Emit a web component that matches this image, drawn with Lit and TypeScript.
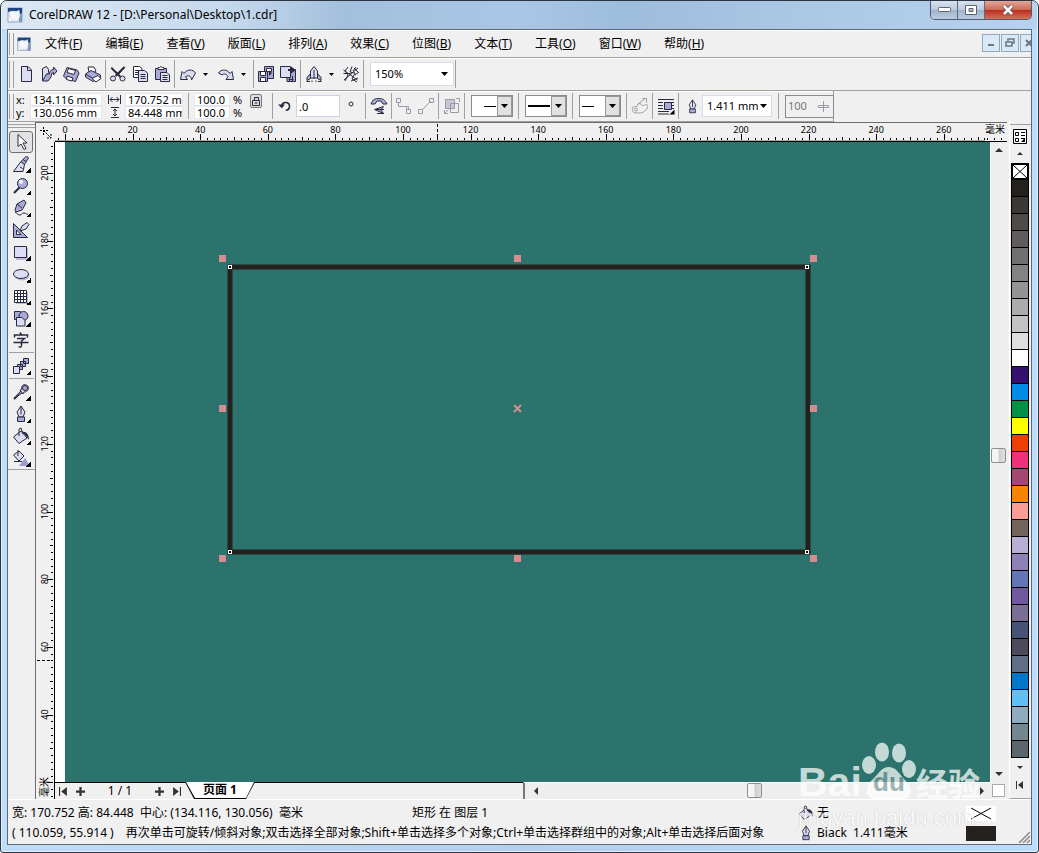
import { LitElement, html, svg, css, TemplateResult } from "lit";
import { customElement } from "lit/decorators.js";

const MENUS: [string, string][] = [
  ["文件", "F"], ["编辑", "E"], ["查看", "V"], ["版面", "L"], ["排列", "A"], ["效果", "C"],
  ["位图", "B"], ["文本", "T"], ["工具", "O"], ["窗口", "W"], ["帮助", "H"],
];

const PALETTE = [
  "#24211d", "#3a3734", "#4f4a47", "#605c5b", "#70706e", "#838382", "#949494", "#acacaa", "#c3c3c1", "#dededc",
  "#ffffff", "#35106f", "#008be6", "#009147", "#ffff00", "#ee3f00", "#f03078", "#a44872", "#f58400", "#fb9c97",
  "#71645a", "#b9afd6", "#8f80b7", "#6375b4", "#7159a0", "#7a6e95", "#465377", "#4e4a5b", "#5f6e86", "#0077c8",
  "#5fc0f5", "#8facbf", "#738790", "#5b676d",
];

const UNIT = 3.38;

// Icons are drawn on an 18 x 18 grid.
const ICONS: Record<string, TemplateResult> = {
  app: svg`<rect x="2" y="2" width="14" height="14" fill="#fff" stroke="#8aa0bd"/><path d="M2 2h14v14h-3l1-7-2-4H7L2 6z" fill="#1e447c"/><path d="M14 8l2-1v9h-3z" fill="#7f9cc4"/><path d="M3 6l4-1 3 1 3-2 1 5-1 3-1 3H6L4 12z" fill="#f4f7fb" stroke="#b5c4d6" stroke-width=".6"/>`,
  doc: svg`<path class="l" d="M3.500 1.500h6.500l3.500 3.500v11.500h-10z"/><path class="n" d="M9.500 1.500v4h4"/>`,
  open: svg`<path class="l" d="M2.500 15.500V3.500l4-2 2 3v3l-4 8z"/><path class="f" d="M2.500 16l4-7h3c0-3 2-4.500 4-4.500V2l3.500 4-3.500 4V7.500c-2 0-2 2-2.500 4.500l-3 4z"/>`,
  save: svg`<path class="f" d="M5 2.500l10 2.500 2 3-3.500 8.500-9-2.500-3-3z"/><path class="w" d="M6.500 3.500l7 2-1.500 4-7-2zM5 11l6 2-1 3-5.500-1.500z"/>`,
  print: svg`<path class="w" d="M4 2h6l2 4-4 3-3-2z"/><path class="f" d="M1.500 9L7 5.500l9.500 4.500v3L9 16.500 1.500 12z"/><path class="w" d="M8 13.500l6-3 3 3-5 3.500z"/><path class="n" d="M2 9.500l6.500 3.500"/>`,
  cut: svg`<path class="s2" d="M15.500 2L6.500 11M2.500 3l9 9"/><path class="w" d="M2 2.500l8 7M16 2l-7 8"/><ellipse class="l" cx="4" cy="13.500" rx="2.500" ry="2.500"/><ellipse class="l" cx="13.500" cy="13.500" rx="2.500" ry="2.500"/>`,
  copy: svg`<path class="w" d="M2.500 1.500h6l2.500 2v9H2.500z"/><path class="n" d="M4 5.500h5M4 7.500h3M4 9.500h3"/><path class="l" d="M7.500 5.500h6L16.500 8v8.500h-9z"/><path class="n" d="M9.500 9.500h5M9.500 11.500h5M9.500 13.500h5"/>`,
  paste: svg`<path class="f" d="M2.500 3.500h11v11h-11z"/><path class="w" d="M5 4.500V2.500h1.500l1.500-1 1.500 1H11v2z"/><path class="l" d="M7.500 7.500h6.500L16.500 10v6.500h-9z"/><path class="n" d="M9.500 10.500h5M9.500 12.500h5M9.500 14.500h5"/>`,
  undo: svg`<path class="l" d="M1.500 14.500L3 6.500l2 2C8 4 14 4 16.500 8l-4 7c0-4-3-5-6-3.500l2 3z"/>`,
  redo: svg`<path class="l" d="M16.500 14.500L15 6.500l-2 2C10 4 4 4 1.500 8l4 2c1-2 4-1 5.500 1.500l-2 3z"/>`,
  import: svg`<path class="f" d="M7.500 1.500h9v12h-9z"/><path class="w" d="M9.500 3.500h5v3h-5z"/><path class="f" d="M1.500 6.500h9v10h-9z"/><path class="w" d="M3.500 6.500h5v4h-5zM3.500 12.500h5v4h-5z"/><path class="k" d="M12 9V5.500L15 8l-3 3z"/>`,
  export: svg`<path class="f" d="M8 4.500h8.500v12H8z"/><path class="l" d="M1.500 1.500h10v11h-10z"/><path class="k" d="M12 4V1.500L17 5l-5 3.500V6H9V4z"/><path class="n" d="M9.500 14.500h5M10.500 16v-3M13.500 16v-5"/>`,
  launch: svg`<path class="l" d="M5.500 13V6L9 1.500 12.500 6v7z"/><path class="f" d="M5.500 8.500L2 12.500v3l3.500-2zM12.500 8.500l3.500 4v3l-3.500-2z"/><path class="n" d="M9 5v9M7 15.500v1.500M11 15.500v1.500M1.500 16.500H5M13 16.500h3.500"/>`,
  web: svg`<path class="n" d="M1.500 5l14 10M2 15L16 3M6 2l-3 4 3 4-3 6M10 1.500L8 7l5 1-3 6 5 3M1.500 8.500h7M12 3l4 4M14 2l-3 4M9 16l7-3M13 10l4-3"/>`,
  pick: svg`<path class="w" d="M6 1.500v12l3-2.500 3 5.500 2-1-3-5.500h4z"/>`,
  shape: svg`<path class="l" d="M1.500 16.500L9 6.500l3.500 3-1.500 7z"/><path class="f" d="M9 6.500L14.500 1l2 2-4 6.500z"/><path class="n" d="M11 4.500l3 2M8 12l2.500 1.500"/>`,
  zoom: svg`<path class="s2" d="M2 16l6-6"/><circle class="f" cx="10.500" cy="6.500" r="5"/><circle cx="9" cy="5" r="2" fill="#fff"/>`,
  free: svg`<path class="f" d="M3 11L5 5l7-4 2 3-4 7-6 2z"/><path class="n" d="M5 5l5 4M3 13c3 2 3 3 5 3s1-2 4-2 2 2 4 1"/>`,
  smart: svg`<path fill-rule="evenodd" class="f" d="M1.500 2.500v14h14zM4.500 9v4.500H9z"/><path class="l" d="M8 10l2-5 5-3.500 2 2-3 4.500z"/>`,
  rect: svg`<path class="sh" d="M4 5h12v12H4z"/><path class="l" d="M2.500 3.500h12v11h-12z"/>`,
  ellipse: svg`<ellipse class="sh" cx="10" cy="10.500" rx="7.500" ry="5"/><ellipse class="l" cx="9" cy="9" rx="7.500" ry="4.500"/>`,
  grid: svg`<path class="sh" d="M4 5h12v12H4z"/><path class="w" d="M2.500 3.500h12v12h-12z"/><path class="n" d="M2.500 6.500h12M2.500 9.500h12M2.500 12.500h12M5.500 3.500v12M8.500 3.500v12M11.500 3.500v12"/>`,
  shapes: svg`<path class="f" d="M2.500 2.500h6v8h-6z"/><circle class="f" cx="11.500" cy="7" r="4.500"/><path class="l" d="M4.500 8.500H10l3 3v5.500H4.500z"/>`,
  text: svg`<path class="n" stroke-width="1.500" d="M2.500 6.500V4h13v2.500M8 1.500l1.500 2.500M5 7.500h7.500l-3 2.500v4.500c0 2-1.500 2-3 1M1.500 11.500h15"/>`,
  blend: svg`<path class="f" d="M11.500 1.500h5v5h-5zM8.500 4.500h5v5h-5zM5.500 7.500h5v5h-5z"/><path class="l" d="M1.500 9.500h6v7h-6z"/>`,
  eyedrop: svg`<path class="s2" d="M2 16l8-8"/><path class="f" d="M2 16l7-8 1.500 1.500z"/><path class="l" d="M8 7l3 4 1-2c5 0 6-6 2-7-3-1-5 1-4 4z"/><circle class="f" cx="13" cy="5" r="2.500"/>`,
  pen: svg`<path class="l" d="M7 12L5 7l4-6 4 6-2 5z"/><path class="n" d="M9 1.500v8"/><path class="f" d="M5.500 12h7v4.500h-7z"/>`,
  bucket: svg`<path class="l" d="M1.500 10L9 4l6 7-8 5.500z"/><path class="n" d="M7 9V2l2-1 2 6"/><path class="k" d="M10 5c4-1 7 2 7 8l-3-4z"/>`,
  ifill: svg`<path d="M7 17L13 9l5 8z" fill="#9a9acb"/><path class="l" d="M1.500 6L7 2l5 5-5 5z"/><path class="n" d="M6 7V1M2 12.500h8"/>`,
  rotate: svg`<path class="s2" d="M5 8a5 5 0 1 1 5 6.500"/><path class="k" d="M0 7h9l-4 5z"/>`,
  mirror: svg`<path class="f" d="M1 7c2-5 4-5.500 8-5.500S15 3 17 7h-4L11 4H7L5 7z"/><path class="f" d="M13.500 9.500l-9 3 9 4-2.500-3.500z"/><path class="n" d="M6 12.500h8M7 16.500h7"/>`,
  conn1: svg`<path class="g" d="M3.500 5.500v4h8v3M1.500 1.500h4v4h-4zM11.500 12.500h4v4h-4zM13.500 12v-2.500h-3"/>`,
  conn2: svg`<path class="g" d="M5 13l9-9M1.500 12.500h4v4h-4zM12.500 1.500h4v4h-4z"/>`,
  group: svg`<path class="gf" d="M2.500 2.500h9v9h-9z"/><path class="g" d="M7.500 6.500h8v9h-8zM2 16.500h3M13 1.500h3.500V5M1.500 13v3.500l4-4"/>`,
  palette: svg`<path class="g" d="M1.500 13.500c-1-4 1-4 4-4 2 0 0-3 3-3s1 3 4 2 4-2 4 1-4 7-9 6.500-5 0-6-2.500zM6 8l8-6.500M11.500 1.500h4v4"/><circle class="g" cx="5" cy="12.500" r="1.500"/>`,
  wrap: svg`<path class="n" d="M1 2.500h16M1 5.500h5M1 8.500h5M1 11.500h5M1 14.500h11M1 17h11M8 5.500h9M15 8.500h2M15 11.500h2"/><path class="f" d="M7.500 5.500h7v7h-7z"/><path d="M17.500 12.500v5h-5z"/>`,
};

const icon = (name: string, size = 18) =>
  html`<svg class="ico" width=${size} height=${size} viewBox="0 0 18 18" aria-hidden="true">${ICONS[name]}</svg>`;
const caret = html`<svg class="caret" width="7" height="4" viewBox="0 0 7 4" aria-hidden="true"><path d="M0 0h7L3.500 4z" /></svg>`;
const arrow = (d: string) =>
  html`<svg width="8" height="8" viewBox="0 0 8 8" aria-hidden="true"><path d=${d} fill="#333" /></svg>`;

const iconStyles = css`
  svg { display: block; flex: none; }
  .l { fill: #dcdcf3; stroke: #29293f; }
  .f { fill: #aaaad8; stroke: #29293f; }
  .w { fill: #fff; stroke: #29293f; }
  .n { fill: none; stroke: #29293f; }
  .k { fill: #29293f; }
  .s2 { fill: none; stroke: #29293f; stroke-width: 2; }
  .sh { fill: #b9b9d8; }
  .g { fill: none; stroke: #9b9ba8; }
  .gf { fill: #c7c7d6; stroke: #9b9ba8; }
`;

const controlStyles = css`
  :host { box-sizing: border-box; }
  *, *::before, *::after { box-sizing: border-box; }
  button, input, select { font: inherit; color: inherit; margin: 0; padding: 0; border: 0; border-radius: 0; }
  button { background: none; display: flex; align-items: center; justify-content: center; }
`;

@customElement("draw-workspace")
class DrawWorkspace extends LitElement {
  static styles = [controlStyles, iconStyles, css`
    :host {
      display: grid;
      grid-template: 19px minmax(0, 1fr) 17px / 19px minmax(0, 1fr) 17px;
      border-top: 1px solid #6d6d6d;
      border-left: 1px solid #6d6d6d;
      background: #f0f0f0;
      min-width: 0;
      min-height: 0;
    }
    svg { width: 100%; height: 100%; min-width: 0; min-height: 0; }
    text { font: 9px "Noto Sans", "Noto Sans CJK SC", sans-serif; text-anchor: middle; fill: #000; }
    .unit { font-size: 10px; }
    .tick { stroke: #000; }
    .origin { display: flex; align-items: center; justify-content: center; }
    .origin svg { width: 12px; height: 12px; }
    .hr { grid-column: 2 / 4; border-bottom: 1px solid #000; box-shadow: inset 0 -1px #aaa; display: flex; justify-content: flex-end; }
    .hr svg { flex: 1; overflow: visible; }
    .hr .tail { flex: none; width: 22px; background: #f0f0f0; }
    .vr { grid-row: 2 / 4; border-right: 1px solid #000; overflow: hidden; }
    .canvas { background: #2b736c; border-left: 10px solid #fff; overflow: hidden; }
    .vs, .hs { display: flex; background: #eee; }
    .vs { flex-direction: column; border-left: 1px solid #fff; }
    .end { width: 16px; height: 16px; flex: none; }
    .end svg { width: 8px; height: 8px; }
    .nav button svg { width: 9px; height: 9px; }
    .thumb { width: 15px; height: 15px; flex: none; border: 1px solid #8e8e8e; border-radius: 2px; background: linear-gradient(90deg, #f5f5f5 45%, #d0d0d4 55%, #dedee2); }
    .up { flex: 291; } .down { flex: 305; }
    .left { flex: 204; } .right { flex: 212; }
    .bottom { grid-column: 2 / 4; display: grid; grid-template-columns: 1fr 1fr 17px; min-width: 0; }
    .nav { display: flex; align-items: center; border-top: 1px solid #000; font: 12px "Noto Sans", sans-serif; height: 17px; }
    .nav button { width: 17px; height: 16px; }
    .nav .count { width: 62px; text-align: center; line-height: 16px; }
    .nav .tab { width: 70px; margin-top: -1px; height: 17px; background: #000; clip-path: polygon(0 0, 100% 0, 61px 100%, 9px 100%); padding: 0 1px 1px; }
    .nav .tab span { width: 68px; height: 16px; background: #fff; clip-path: polygon(0 0, 100% 0, 60px 100%, 9px 100%); font: bold 12px/15px "Noto Sans", "Noto Sans CJK SC", sans-serif; }
    .hs { border-left: 2px solid #777; border-top: 1px solid #fff; padding-left: 3px; }
    .box { margin: 2px; border: 1px solid #aaa; background: #fff; }
  `];

  private ticks(count: number, from: number, at: (v: number) => number, vertical: boolean) {
    return Array.from({ length: count }, (_, i) => {
      const v = from + i * 2;
      const p = Math.round(at(v)) + 0.5;
      const len = v % 20 === 0 ? 6 : v % 10 === 0 ? 3 : 2;
      return vertical
        ? svg`<path class="tick" d="M${17 - len} ${p}h${len}"/>`
        : svg`<path class="tick" d="M${p} ${17 - len}v${len}"/>`;
    });
  }

  render() {
    const hx = (v: number) => 10 + v * UNIT;
    const vy = (v: number) => 31 + (200 - v) * (UNIT + 0.005);
    const handles = [[158, 117], [453, 117], [749, 117], [158, 267], [749, 267], [158, 417], [453, 417], [749, 417]];
    const nodes = [[165, 125], [742, 125], [165, 410], [742, 410]];
    return html`
      <div class="origin"><svg viewBox="0 0 12 12"><path d="M0 3.500h9M3.500 0v9M4 4l7 7M11 7v4H7" fill="none" stroke="#000" stroke-dasharray="2 1"/></svg></div>
      <div class="hr">
        <svg>
          ${this.ticks(138, -2, hx, false)}
          ${Array.from({ length: 14 }, (_, i) => svg`<text x=${hx(i * 20)} y="10">${i * 20}</text>`)}
          <path class="tick" d="M382.500 1v16" stroke-dasharray="3 2"/>
        </svg>
        <svg class="tail"><text class="unit" x="10" y="10">毫米</text>${[2, 9, 16].map(x => svg`<path class="tick" d="M${x}.500 15v2"/>`)}</svg>
      </div>
      <div class="vr">
        <svg>
          ${this.ticks(97, 16, vy, true)}
          ${Array.from({ length: 9 }, (_, i) => svg`<text x="0" y="0" transform="translate(12 ${vy(200 - i * 20)}) rotate(-90)">${200 - i * 20}</text>`)}
          <path class="tick" d="M1 518.500h16" stroke-dasharray="3 2"/>
          <text class="unit" transform="translate(12 645) rotate(-90)">毫米</text>
        </svg>
      </div>
      <div class="canvas">
        <svg>
          <rect x="165" y="125" width="578" height="285" fill="none" stroke="#24211e" stroke-width="5"/>
          ${handles.map(([x, y]) => svg`<rect x=${x - 4} y=${y - 4} width="7" height="7" fill="#d68c90"/>`)}
          ${nodes.map(([x, y]) => svg`<rect x=${x - 1.5} y=${y - 1.5} width="3" height="3" fill="#000" stroke="#fff"/>`)}
          <path d="M449 263l7 7M456 263l-7 7" stroke="#d68c90" stroke-width="2"/>
        </svg>
      </div>
      <div class="vs">
        <button class="end" aria-label="向上滚动">${arrow("M0 6h8L4 2z")}</button><span class="up"></span>
        <div class="thumb"></div><span class="down"></span>
        <button class="end" aria-label="向下滚动">${arrow("M0 2h8L4 6z")}</button>
      </div>
      <div class="bottom">
        <div class="nav">
          <button aria-label="第一页">${arrow("M0 0h1v8H0zM7 0v8L2 4z")}</button>
          <button aria-label="前加页">${arrow("M3 0h2v3h3v2H5v3H3V5H0V3h3z")}</button>
          <span class="count">1 / 1</span>
          <button aria-label="后加页">${arrow("M3 0h2v3h3v2H5v3H3V5H0V3h3z")}</button>
          <button aria-label="最后页">${arrow("M7 0h1v8H7zM1 0v8l5-4z")}</button>
          <button class="tab"><span>页面 1</span></button>
        </div>
        <div class="hs">
          <button class="end" aria-label="向左滚动">${arrow("M6 0v8L2 4z")}</button><span class="left"></span>
          <div class="thumb"></div><span class="right"></span>
          <button class="end" aria-label="向右滚动">${arrow("M2 0v8l4-4z")}</button>
        </div>
        <div class="box"></div>
      </div>`;
  }
}

@customElement("app-root")
class AppRoot extends LitElement {
  static styles = [controlStyles, iconStyles, css`
    :host {
      display: grid;
      grid-template-rows: 28px minmax(0, 1fr);
      position: relative;
      height: 100vh;
      padding: 0 6px 7px;
      border: 1px solid #2b3443;
      border-radius: 7px 7px 3px 3px;
      background: linear-gradient(90deg, #bfdcf8, #b3d0ee 50%, #bcdcfb);
      box-shadow: inset 0 0 0 1px #e4f1fd;
      font: 12px/16px "Noto Sans", "Noto Sans CJK SC", sans-serif;
      color: #000;
      overflow: hidden;
    }
    .title { display: flex; align-items: center; gap: 5px; margin: 0 -5px; padding-left: 4px; background: linear-gradient(90deg, #dce8f4, #c5d9ed 22%, #a3bfdc 33%, #a9c7e5 50%, #9ebcdb 60%, #a9c6e3 75%, #b7d2ee); }
    .title h1 { flex: 1; margin: 0; font: 12px/28px "Noto Sans", sans-serif; }
    .wc { display: flex; align-self: flex-start; height: 19px; margin-right: 5px; border: 1px solid #4d5c70; border-top: 0; border-radius: 0 0 5px 5px; overflow: hidden; }
    .wc button { width: 27px; background: linear-gradient(#d5e1ee, #bccbdc 50%, #9fb3ca 52%, #b9cce1); border-right: 1px solid #5c6c80; }
    .wc .close { width: 46px; border: 0; background: linear-gradient(#e5a698, #cf6a57 48%, #b9301c 52%, #d5705b); }
    .client { display: grid; grid-template-rows: 28px 33px 31px minmax(0, 1fr) 45px; min-width: 0; border: 1px solid #5d6b79; background: #f0f0f0; }
    .menu, .tools, .props { display: flex; align-items: center; border-bottom: 1px solid #a0a0a0; padding-left: 1px; min-width: 0; box-shadow: inset 0 1px #fff; }
    .grip { flex: none; width: 5px; align-self: stretch; margin: 3px 2px 2px 0; border-left: 1px solid #a0a0a0; border-right: 1px solid #a0a0a0; }
    .menu nav { display: flex; flex: 1; gap: 1px; padding-left: 2px; }
    .menu nav button { padding: 0 11px; height: 22px; white-space: nowrap; }
    .mdi { display: flex; gap: 1px; align-self: flex-start; padding-top: 4px; width: 49px; overflow: hidden; }
    .mdi button { flex: none; width: 18px; height: 18px; border: 1px solid #8fa8bf; background: #dbe9f6; }
    .tb { width: 22px; height: 22px; flex: none; }
    .dd { width: 38px; justify-content: flex-start; gap: 6px; padding-left: 3px; }
    .sep { flex: none; width: 1px; margin: 2px 1px; align-self: stretch; background: #a0a0a0; }
    .combo { display: grid; align-items: center; height: 24px; background: #fff; border: 1px solid #d5dce8; flex: none; }
    .combo select, .combo .caret { grid-area: 1 / 1; }
    .combo select { appearance: none; background: none; height: 100%; padding-left: 4px; font-size: 11px; width: 100%; outline: 0; }
    .caret { justify-self: end; margin-right: 5px; pointer-events: none; }
    .dd .caret { margin: 0; width: 5px; height: 3px; }
    .zoom { width: 84px; margin-left: 5px; }
    .props { width: 826px; max-width: 100%; border-right: 1px solid #a0a0a0; font-size: 11px; }
    .props .sep { margin: 2px 0; }
    .pair { display: grid; grid-auto-rows: 13px; align-items: center; flex: none; }
    .pair input { height: 13px; width: 100%; background: #fff; border: 1px solid #e3e6ee; padding-left: 2px; line-height: 11px; }
    .xy { grid-template-columns: 14px 72px; padding-right: 6px; }
    .wh { grid-template-columns: 17px 58px; padding-right: 5px; }
    .scale { grid-template-columns: 36px 20px; padding-left: 5px; }
    .scale label { padding-left: 3px; }
    .lock { width: 14px; height: 14px; margin: -10px 10px 0 0; border: 1px solid #77777f; border-radius: 2px; background: #ddd; }
    .field { width: 44px; height: 22px; border: 1px solid #ccd3e0; background: #fff; padding-left: 2px; }
    .icons { display: flex; align-items: center; justify-content: center; flex: none; }
    .w23 { width: 23px; } .w25 { width: 25px; } .w47 { width: 46px; }
    .line { width: 42px; height: 22px; margin: 0 5px 0 6px; border: 1px solid #8c8c8c; background: #fff linear-gradient(#000, #000) no-repeat; }
    .thin { background-size: 12px 1px; background-position: 12px 10px; }
    .thick { background-size: 22px 2px; background-position: 2px 9px; }
    .short { background-size: 12px 1px; background-position: 2px 10px; }
    .line select { color: transparent; }
    .line option { color: #000; }
    .line .caret { width: 15px; height: 20px; padding: 7px 3px; margin: 0; background: #e1e1e1; border: 1px solid #999; }
    .pen { margin: 0 2px 0 6px; }
    .weight { width: 70px; height: 22px; margin-right: 6px; }
    .weight .caret { margin-right: 4px; }
    .opacity { display: flex; align-items: center; width: 49px; height: 23px; margin-left: 6px; padding: 0 4px 0 2px; border: 1px solid #8c8c8c; color: #777; flex: none; }
    .opacity input { width: 30px; background: none; }
    .main { display: grid; grid-template: minmax(0, 1fr) / 27px minmax(0, 1fr) 24px; min-height: 0; }
    .box { padding: 9px 1px 0; border-bottom: 1px solid #a0a0a0; align-self: start; background: linear-gradient(#a0a0a0, #a0a0a0) 0 2px / 100% 1px no-repeat, linear-gradient(#a0a0a0, #a0a0a0) 0 5px / 100% 1px no-repeat; }
    .box button { position: relative; width: 24px; height: 22px; }
    .box .fly::after { content: ""; position: absolute; right: 2px; bottom: 2px; width: 5px; height: 5px; background: linear-gradient(135deg, transparent 50%, #000 50%); }
    .box .on { border: 1px solid #6f6f6f; border-radius: 3px; background: #e2e2e2; }
    .box hr { margin: 1px 0 2px; border: 0; border-top: 1px solid #a0a0a0; }
    .pal { display: flex; flex-direction: column; align-items: center; margin-left: 2px; padding: 5px 1px 0 0; border-left: 1px solid #fff; background: linear-gradient(#a0a0a0, #a0a0a0) 0 2px / 100% 1px no-repeat; border-bottom: 1px solid #a0a0a0; }
    .pal button { flex: none; width: 18px; height: 18px; }
    .chips { width: 18px; border: 1px solid #000; border-top: 0; flex: none; }
    .pal .chip { display: block; width: 16px; height: 17px; border-bottom: 1px solid #000; background: var(--c); }
    .pal .chip:last-child { height: 16px; border: 0; }
    .pal .none { height: 17px; border: 2px solid #000; background: #fff; }
    .status { display: grid; grid-template: 20px 20px / 400px 1fr 168px 65px; padding: 3px 0 0 4px; border-top: 1px solid #fff; white-space: pre; line-height: 20px; position: relative; }
    .hint { grid-column: 1 / 3; display: flex; gap: 12px; }
    .cell { display: flex; align-items: center; gap: 3px; }
    .chipbox { width: 30px; height: 15px; align-self: center; background: #fff; }
    .dark { background: #24211e; }
    .size { position: absolute; right: 1px; bottom: 1px; }
    .mark { position: absolute; right: 58px; bottom: 22px; width: 182px; color: #fff; opacity: .72; pointer-events: none; }
    .mark .row { display: flex; align-items: flex-end; justify-content: space-between; font: bold 41px/36px "Liberation Sans", sans-serif; height: 60px; }
    .mark .cn { font: bold 32px/36px "Noto Sans CJK SC", sans-serif; width: 64px; }
    .mark .paw { display: grid; justify-items: center; align-items: end; }
    .mark .paw > * { grid-area: 1 / 1; }
    .mark .du { font: bold 26px/36px "Liberation Sans", sans-serif; color: #809f9b; }
    .mark .url { margin-top: 6px; font: 22px/24px "Liberation Sans", sans-serif; white-space: nowrap; text-shadow: 0 0 1px #999; }
  `];

  private tool(name: string, label: string) {
    return html`<button class="tb" title=${label} aria-label=${label}>${icon(name)}</button>`;
  }

  private drop(name: string, label: string) {
    return html`<button class="tb dd" aria-label=${label}>${icon(name)}${caret}</button>`;
  }

  private line(cls: string, label: string) {
    return html`<div class="combo line ${cls}"><select aria-label=${label}><option>—</option></select>${caret}</div>`;
  }

  render() {
    const sep = html`<span class="sep"></span>`;
    const box: [string, string, boolean][] = [
      ["pick", "挑选", false], ["shape", "形状", true], ["zoom", "缩放", true], ["free", "手绘", true], ["smart", "智能绘图", false],
      ["rect", "矩形", true], ["ellipse", "椭圆", true], ["grid", "图纸", true], ["shapes", "基本形状", true], ["text", "文本", false],
      ["blend", "交互式调和", true], ["eyedrop", "滴管", true], ["pen", "轮廓", true], ["bucket", "填充", true], ["ifill", "交互式填充", true],
    ];
    return html`
      <header class="title">
        ${icon("app")}<h1>CorelDRAW 12 - [D:\\Personal\\Desktop\\1.cdr]</h1>
        <div class="wc">
          <button aria-label="最小化"><svg width="13" height="6"><rect x=".5" y=".5" width="12" height="4" rx="1" fill="#fff" stroke="#5a6470"/></svg></button>
          <button aria-label="最大化"><svg width="12" height="10"><path d="M.5.500h11v9H.5zM4 3.500h4v3H4z" fill="#fff" fill-rule="evenodd" stroke="#5a6470"/></svg></button>
          <button class="close" aria-label="关闭"><svg width="14" height="12" viewBox="0 0 14 12"><path d="M3 2l8 8M11 2l-8 8" stroke="#59505a" stroke-width="4.500"/><path d="M3 2l8 8M11 2l-8 8" stroke="#fff" stroke-width="2.500"/></svg></button>
        </div>
      </header>
      <div class="client">
        <div class="menu">
          <span class="grip"></span>${icon("app", 16)}
          <nav>${MENUS.map(([t, k]) => html`<button>${t}(<u>${k}</u>)</button>`)}</nav>
          <div class="mdi">
            <button aria-label="最小化文档"><svg width="8" height="8"><path d="M1 6h6" stroke="#667788" stroke-width="2"/></svg></button>
            <button aria-label="还原文档"><svg width="10" height="10"><path d="M3 3V1h6v4H7M1 4h6v4H1z" fill="none" stroke="#667788" stroke-width="1.500"/></svg></button>
            <button aria-label="关闭文档"><svg width="8" height="8"><path d="M1 1l6 6M7 1L1 7" stroke="#667788" stroke-width="2"/></svg></button>
          </div>
        </div>
        <div class="tools">
          <span class="grip"></span>
          ${this.tool("doc", "新建")}${this.tool("open", "打开")}${this.tool("save", "保存")}${this.tool("print", "打印")}${sep}
          ${this.tool("cut", "剪切")}${this.tool("copy", "复制")}${this.tool("paste", "粘贴")}${sep}
          ${this.drop("undo", "撤消")}${this.drop("redo", "重做")}${sep}
          ${this.tool("import", "导入")}${this.tool("export", "导出")}${sep}
          ${this.drop("launch", "应用程序启动器")}${this.tool("web", "社区")}${sep}
          <div class="combo zoom"><select aria-label="缩放级别"><option>150%</option></select>${caret}</div><span class="sep"></span>
        </div>
        <div class="props">
          <span class="grip"></span>
          <div class="pair xy">
            <label for="x">x:</label><input id="x" value="134.116 mm">
            <label for="y">y:</label><input id="y" value="130.056 mm">
          </div>
          <div class="pair wh">
            <label for="w" aria-label="宽度"><svg width="13" height="9"><path class="n" d="M.5 0v9M12.500 0v9M2 4.500h9M4.500 2L2 4.500 4.500 7M8.500 2L11 4.500 8.500 7"/></svg></label><input id="w" value="170.752 mm">
            <label for="h" aria-label="高度"><svg width="13" height="11"><path class="n" d="M3 .5h8M3 10.500h8M7 2v7M5 4l2-2 2 2M5 7l2 2 2-2"/></svg></label><input id="h" value="84.448 mm">
          </div>
          ${sep}
          <div class="pair scale">
            <input id="sx" value="100.0"><label for="sx">%</label>
            <input id="sy" value="100.0"><label for="sy">%</label>
          </div>
          <button class="lock" aria-label="锁定比例"><svg width="10" height="10"><path class="n" d="M1.500 4.500h7v5h-7zM3.500 4V1.500h4V4M3.500 7h3"/></svg></button>
          ${sep}
          <label for="rot" class="icons w23">${icon("rotate", 14)}</label>
          <input class="field" id="rot" value=".0"><span class="icons w25"><svg width="18" height="14"><circle class="n" cx="7" cy="5" r="2"/></svg></span>${sep}
          <button class="icons w25" aria-label="镜像">${icon("mirror")}</button>${sep}
          <span class="icons w47"><button class="tb" aria-label="直角连接">${icon("conn1")}</button><button class="tb" aria-label="直线连接">${icon("conn2")}</button></span>${sep}
          <button class="icons w25" aria-label="群组">${icon("group")}</button>${sep}
          ${this.line("thin", "起始箭头")}${sep}${this.line("thick", "轮廓样式")}${sep}${this.line("short", "终止箭头")}${sep}
          <button class="icons w25" aria-label="闭合曲线">${icon("palette")}</button>${sep}
          <button class="icons w25" aria-label="段落文本换行">${icon("wrap")}</button>${sep}
          <label class="pen" for="weight" aria-label="轮廓宽度">${icon("pen", 15)}</label>
          <div class="combo weight"><select id="weight"><option>1.411 mm</option></select>${caret}</div>${sep}
          <div class="opacity"><input aria-label="平滑度" value="100" disabled><svg width="11" height="11"><path class="g" d="M.5 4.500h10v2H.5zM5.500 0v11"/></svg></div>
        </div>
        <div class="main">
          <div class="box">
            ${box.map(([n, l, fly], i) => html`${i === 10 || i === 11 ? html`<hr>` : null}<button class="${fly ? "fly" : ""} ${i === 0 ? "on" : ""}" aria-label=${l}>${icon(n)}</button>`)}
          </div>
          <draw-workspace></draw-workspace>
          <div class="pal">
            <button aria-label="调色板选项"><svg width="14" height="15"><path d="M.5.500h13v14H.5z" fill="#fff" stroke="#000"/><path d="M2.500 3.500h3v3h-3zM2.500 9.500h3v3h-3zM8 3.500h4M8 6.500h4M8 9.500h4" fill="none" stroke="#000"/><path d="M12 9v4H8z"/></svg></button>
            <button aria-label="上一行颜色">${arrow("M1 5h6L4 2z")}</button>
            <button class="none" aria-label="无颜色"><svg width="14" height="13"><path d="M0 0l14 13M14 0L0 13" stroke="#000"/></svg></button>
            <div class="chips">${PALETTE.map(c => html`<button class="chip" aria-label=${c} style="--c:${c}"></button>`)}</div>
            <button aria-label="下一行颜色">${arrow("M1 3h6L4 6z")}</button>
            <button aria-label="展开调色板">${arrow("M0 0h1v8H0zM7 0v8L2 4z")}</button>
          </div>
        </div>
        <footer class="status">
          <span>宽: 170.752 高: 84.448  中心: (134.116, 130.056)  毫米</span><span>矩形 在 图层 1</span>
          <span class="cell">${icon("bucket", 16)}无</span><span class="chipbox"><svg width="30" height="15"><path d="M5 2l20 11M25 2L5 13" stroke="#000"/></svg></span>
          <span class="hint"><span>( 110.059, 55.914 )</span><span>再次单击可旋转/倾斜对象;双击选择全部对象;Shift+单击选择多个对象;Ctrl+单击选择群组中的对象;Alt+单击选择后面对象</span></span>
          <span class="cell">${icon("pen", 16)}Black  1.411毫米</span><span class="chipbox dark"></span>
          <svg class="size" width="12" height="12"><path d="M1 12L12 1M5 12l7-7M9 12l3-3" stroke="#888" stroke-width="1.500"/></svg>
        </footer>
      </div>
      <div class="mark" aria-hidden="true">
        <div class="row"><span>Bai</span>
          <span class="paw"><svg width="54" height="58" viewBox="0 0 54 58"><g fill="#fff"><ellipse cx="7" cy="23" rx="7" ry="9"/><ellipse cx="20" cy="10" rx="7" ry="9.500"/><ellipse cx="37" cy="11" rx="7" ry="9.500"/><ellipse cx="47" cy="27" rx="7" ry="9"/><path d="M27 25c8 0 11 9 17 14 9 8 4 19-6 19H16C5 58 1 47 9 39c7-6 10-14 18-14z"/></g></svg><span class="du">du</span></span>
          <span class="cn">经验</span></div>
        <div class="url">jingyan.baidu.com</div>
      </div>`;
  }
}
